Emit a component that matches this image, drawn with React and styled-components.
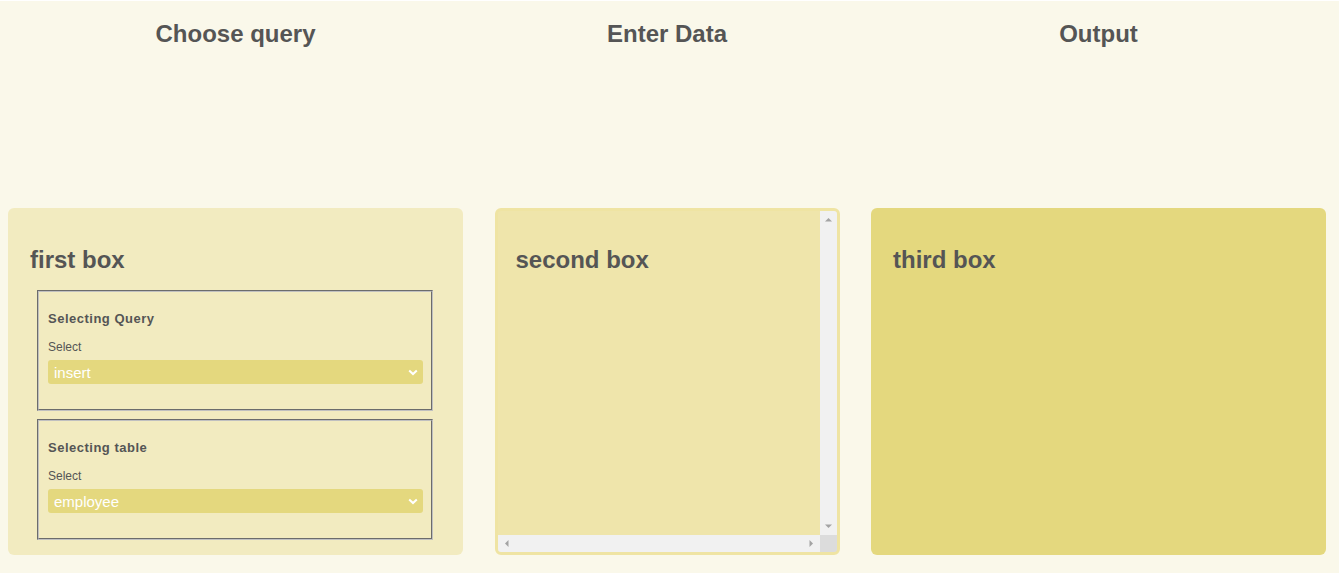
import React from "react";
import styled, { createGlobalStyle } from "styled-components";

const Global = createGlobalStyle`
  html, body { margin: 0; padding: 0; background: #ffffff; }
  body { font-family: "Liberation Sans", Arial, sans-serif; color: #555555; }
`;

const Page = styled.div`
  margin-top: 1px;
  height: 572px;
  box-sizing: border-box;
  background: #faf8ea;
  padding-left: 8px;
  padding-top: 19px;
`;

const Grid = styled.div`
  display: grid;
  grid-template-columns: 455px 345px 455px;
  column-gap: 31.5px;
`;

const Heading = styled.h2`
  margin: 0;
  font-size: 24px;
  line-height: 28px;
  font-weight: bold;
  text-align: center;
  color: #555555;
`;

const Boxes = styled(Grid)`
  margin-top: 160px;
`;

const Box = styled.section`
  height: 347px;
  box-sizing: border-box;
  border-radius: 6px;
  background: ${(p) => p.$bg};
  padding: 0 22px;
  overflow: hidden;
`;

const ScrollBox = styled.section`
  height: 347px;
  box-sizing: border-box;
  border-radius: 6px;
  border: 3px solid #efe4a3;
  background: #efe5ab;
  overflow: hidden;
  display: grid;
  grid-template-columns: 1fr 17px;
  grid-template-rows: 1fr 17px;
`;

const ScrollContent = styled.div`
  padding: 0 18px;
  min-width: 0;
  min-height: 0;
`;

const Track = styled.div`
  background: #f1f1f1;
  display: flex;
  flex-direction: ${(p) => (p.$vertical ? "column" : "row")};
  justify-content: space-between;
`;

const Corner = styled.div`
  background: #dcdcdc;
`;

const ArrowButton = styled.span`
  width: 17px;
  height: 17px;
  display: flex;
  align-items: center;
  justify-content: center;
`;

const ArrowGlyph = styled.svg`
  width: 17px;
  height: 17px;
  display: block;
`;

const arrowPoints = {
  up: "5,10.5 12,10.5 8.5,7",
  down: "5,6.5 12,6.5 8.5,10",
  left: "10.5,5 10.5,12 7,8.5",
  right: "6.5,5 6.5,12 10,8.5",
};

function Arrow({ dir }) {
  return (
    <ArrowButton>
      <ArrowGlyph viewBox="0 0 17 17">
        <polygon points={arrowPoints[dir]} fill="#a3a3a3" />
      </ArrowGlyph>
    </ArrowButton>
  );
}

const BoxTitle = styled.h3`
  margin: ${(p) => (p.$inset ? "35px" : "38px")} 0 0;
  font-size: 24px;
  line-height: 28px;
  font-weight: bold;
  color: #555555;
`;

const Group = styled.fieldset`
  box-sizing: border-box;
  height: 121px;
  margin: ${(p) => p.$top}px 8px 0 7px;
  padding: 0 8px 0 9px;
  border: 2px groove #c0c0c0;
  min-width: 0;
`;

const GroupTitle = styled.div`
  margin-top: 19px;
  font-size: 13px;
  line-height: 16px;
  font-weight: bold;
  color: #555555;
  letter-spacing: 0.5px;
`;

const Label = styled.label`
  display: block;
  margin-top: 13px;
  font-size: 12px;
  line-height: 14px;
  color: #555555;
`;

const SelectWrap = styled.div`
  position: relative;
  margin-top: 6px;
  height: 24px;
`;

const Select = styled.select`
  appearance: none;
  -webkit-appearance: none;
  width: 100%;
  height: 24px;
  box-sizing: border-box;
  border: none;
  border-radius: 3px;
  background: #e4d87e;
  color: #ffffff;
  font-family: "Liberation Sans", Arial, sans-serif;
  font-size: 15px;
  padding: 0 24px 0 6px;
  outline: none;
`;

const Chevron = styled.svg`
  position: absolute;
  right: 5px;
  top: 9px;
  width: 10px;
  height: 7px;
  pointer-events: none;
`;

function Dropdown({ value, options }) {
  return (
    <SelectWrap>
      <Select defaultValue={value}>
        {options.map((o) => (
          <option key={o} value={o}>
            {o}
          </option>
        ))}
      </Select>
      <Chevron viewBox="0 0 10 7">
        <path d="M1.2 1.4 L5 5 L8.8 1.4" fill="none" stroke="#ffffff" strokeWidth="2" />
      </Chevron>
    </SelectWrap>
  );
}

export default function App() {
  return (
    <>
      <Global />
      <Page>
        <Grid>
          <Heading>Choose query</Heading>
          <Heading>Enter Data</Heading>
          <Heading>Output</Heading>
        </Grid>
        <Boxes>
          <Box $bg="#f2ebc0">
            <BoxTitle>first box</BoxTitle>
            <Group $top={16}>
              <GroupTitle>Selecting Query</GroupTitle>
              <Label>Select</Label>
              <Dropdown value="insert" options={["insert", "update", "delete", "select"]} />
            </Group>
            <Group $top={8}>
              <GroupTitle>Selecting table</GroupTitle>
              <Label>Select</Label>
              <Dropdown value="employee" options={["employee", "department"]} />
            </Group>
          </Box>
          <ScrollBox>
            <ScrollContent>
              <BoxTitle $inset>second box</BoxTitle>
            </ScrollContent>
            <Track $vertical>
              <Arrow dir="up" />
              <Arrow dir="down" />
            </Track>
            <Track>
              <Arrow dir="left" />
              <Arrow dir="right" />
            </Track>
            <Corner />
          </ScrollBox>
          <Box $bg="#e4d87e">
            <BoxTitle>third box</BoxTitle>
          </Box>
        </Boxes>
      </Page>
    </>
  );
}
